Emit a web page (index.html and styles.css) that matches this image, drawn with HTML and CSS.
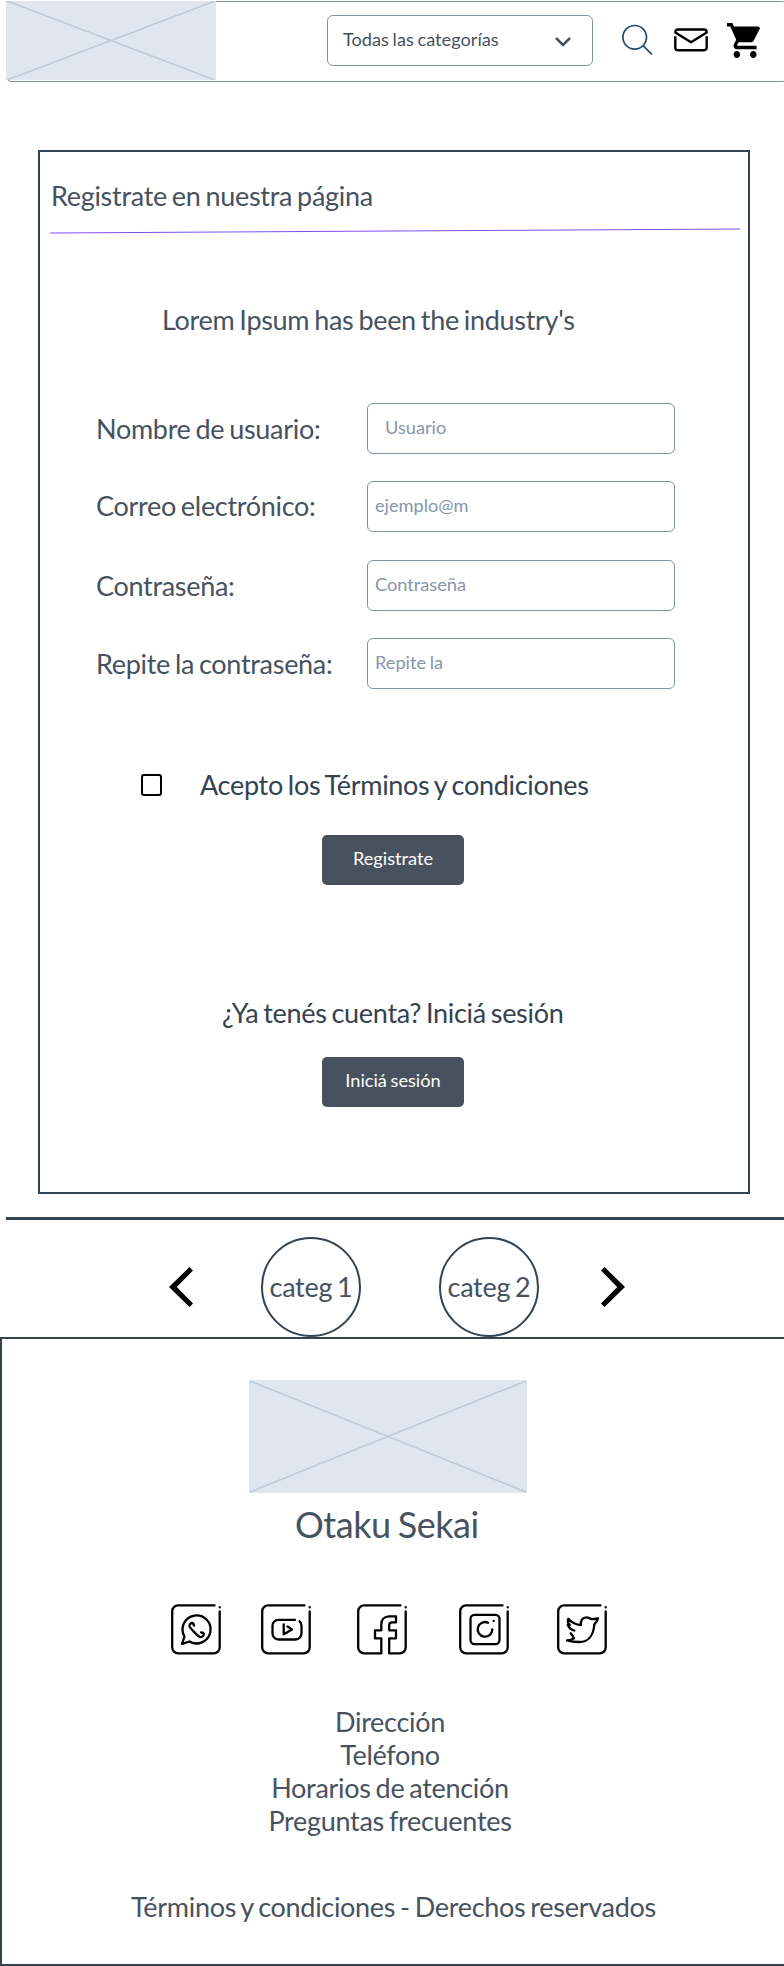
FILE: index.html
```html
<!DOCTYPE html>
<html lang="es">
<head>
<meta charset="utf-8">
<title>Otaku Sekai</title>
<link rel="stylesheet" href="styles.css">
</head>
<body>
<svg class="defs" aria-hidden="true">
  <symbol id="frame" viewBox="0 0 50 51">
    <path d="M43.5 1.4H7.2a6 6 0 0 0-6 6v36a6 6 0 0 0 6 6h35.5a6 6 0 0 0 6-6V7.4M48.7 3.2v.2"/>
  </symbol>
</svg>
<header class="topbar">
  <svg class="logo" viewBox="0 0 210 79" preserveAspectRatio="none"><path d="M1 0 209 79M1 79 209 0"/></svg>
  <button class="select" type="button"><span>Todas las categorías</span>
    <svg class="caret" viewBox="0 0 18 11"><path d="m2 2 7 7 7-7"/></svg>
  </button>
  <svg class="search" viewBox="0 0 32 32"><circle cx="13.7" cy="13.3" r="11.8"/><path d="m22.3 21.8 8.6 8.6"/></svg>
  <svg class="mail" viewBox="0 0 34 24"><path d="M1.3 8.2v11.5a2.5 2.5 0 0 0 2.5 2.5h26.400a2.500 2.500 0 0 0 2.500-2.500V8.200M1.300 4.500c0-2 .8-3 2.800-3h25.800c2 0 2.800 1 2.800 3L17 14.300z"/></svg>
  <svg class="cart" viewBox="1 2 20.700 20" preserveAspectRatio="none"><path d="M7 18c-1.100 0-1.990.9-1.990 2S5.900 22 7 22s2-.9 2-2-.9-2-2-2zM1 2v2h2l3.600 7.590-1.350 2.450c-.16.28-.25.61-.25.960 0 1.100.9 2 2 2h12v-2H7.420c-.14 0-.25-.11-.25-.25l.03-.12.900-1.630h7.450c.75 0 1.410-.41 1.750-1.030l3.580-6.490c.08-.14.120-.31.120-.48 0-.55-.45-1-1-1H5.210l-.94-2H1zm16 16c-1.100 0-1.990.9-1.990 2s.89 2 1.990 2 2-.9 2-2-.9-2-2-2z"/></svg>
</header>

<main class="panel">
  <h1 class="title">Registrate en nuestra página</h1>
  <svg class="rule" viewBox="0 0 690 8"><path d="M0 6 690 2"/></svg>
  <p class="intro">Lorem Ipsum has been the industry's</p>
  <form class="form">
    <label for="user">Nombre de usuario:</label><input class="user" id="user" placeholder="Usuario">
    <label class="email" for="mail">Correo electrónico:</label><input id="mail" placeholder="ejemplo@m">
    <label for="pass">Contraseña:</label><input id="pass" placeholder="Contraseña">
    <label for="again">Repite la contraseña:</label><input id="again" placeholder="Repite la">
  </form>
  <div class="terms"><span class="check"></span><span>Acepto los Términos y condiciones</span></div>
  <button class="btn" type="button">Registrate</button>
  <p class="login">¿Ya tenés cuenta? Iniciá sesión</p>
  <button class="btn" type="button">Iniciá sesión</button>
</main>

<nav class="cats">
  <svg class="arrow" viewBox="0 0 24 40"><path d="M20.500 0 24 3.500 7.800 20 24 36.500 20.500 40 0 20z"/></svg>
  <span class="cat">categ 1</span>
  <span class="cat second">categ 2</span>
  <svg class="arrow next" viewBox="0 0 24 40"><path d="M3.500 0 0 3.500 16.200 20 0 36.500 3.500 40 24 20z"/></svg>
</nav>

<footer class="footer">
  <svg class="brand" viewBox="0 0 278 113" preserveAspectRatio="none"><path d="M1 1 277 112M1 112 277 1"/></svg>
  <h2 class="name">Otaku Sekai</h2>
  <div class="social">
    <svg class="whatsapp" viewBox="0 0 50 51"><use href="#frame"/><path d="M18.500 37.500a14 14 0 1 0-5-5L11 39.800zM23 21.500c-.3-1.500-1-2.500-2-2.500-1.200 0-2.800 1.600-2.500 3.300.4 1.500 8 9.800 10.500 10.700 1.800.5 4-1.300 3.800-2.600-.2-1-1.200-2-2.600-1.900"/></svg>
    <svg class="youtube" viewBox="0 0 50 51"><use href="#frame"/><path d="M34 15.800H17.500a6 6 0 0 0-6 6v7.700a6 6 0 0 0 6 6h17a6 6 0 0 0 6-6v-7.700c0-2-.7-3.600-2-4.500M22.700 20.300v10L31 25.400l-4.500-2.900"/></svg>
    <svg class="facebook" viewBox="0 0 50 51"><path d="M43.500 1.400H7.200a6 6 0 0 0-6 6v36a6 6 0 0 0 6 6H24.300V34.300H18v-8h6.300V20.500c0-5 3.200-8.200 7.700-8.200h7v6h-3.800c-2 0-3 1-3 3v5H39v8h-6.800v15.100h10.500a6 6 0 0 0 6-6V7.400M48.700 3.200v.2"/></svg>
    <svg class="instagram" viewBox="0 0 50 51"><use href="#frame"/><rect x="11.500" y="10.800" width="29" height="29.300" rx="4"/><path d="M29 18.700a7.300 7.300 0 1 0 4.300 6.600M34.700 17v.1"/></svg>
    <svg class="twitter" viewBox="0 0 50 51"><use href="#frame"/><path d="M17.300 26.500c-3-.8-5.300-2.700-6.600-5.800 1 .3 1.500.3 2 .2-2-2-2.300-4-1.400-6.200 3.500 4 7.700 6 12.700 6.300-.8-4.400 1.800-7.700 5.300-7.700 2 0 3.700.8 5 1.900 2.200-.1 4-.4 6.700-.9-.7 2.300-2 4-3.700 6.200C36.500 31.500 31 38.300 21.700 38c-4 0-8-.4-11.700-1.600 3 0 5-.6 7-2-.9-2.200-2-3.600-3.300-5.100"/></svg>
  </div>
  <ul class="links">
    <li>Dirección</li><li>Teléfono</li><li>Horarios de atención</li><li>Preguntas frecuentes</li>
  </ul>
  <p class="legal">Términos y condiciones - Derechos reservados</p>
</footer>
</body>
</html>
```
FILE: styles.css
```css
* { box-sizing: border-box; }
body {
  margin: 0;
  width: 784px;
  height: 1966px;
  overflow: hidden;
  background: #fff;
  color: #475260;
  font: 27px/33px Lato, sans-serif;
  letter-spacing: -0.300px;
  word-spacing: -1.700px;
}
h1, h2, p, ul { margin: 0; padding: 0; font-weight: 400; }
svg { display: block; flex: none; fill: none; overflow: visible; }
.defs { width: 0; height: 0; }

.topbar {
  display: flex;
  width: 781px;
  height: 81px;
  margin: 1px 0 0 6px;
  border: 1px solid #8190a5;
  border-radius: 5px;
}
.logo, .brand { background: #dfe6ee; stroke: #bfcada; stroke-width: 1.700; overflow: hidden; }
.logo { width: 210px; height: 79px; margin: -1px 0 0 -1px; }
.select, .btn, .form input {
  font: 18.200px/21px Lato, sans-serif;
  letter-spacing: 0;
  word-spacing: -1px;
}
.select {
  display: flex;
  justify-content: space-between;
  width: 266px;
  height: 51px;
  margin: 13px 0 0 111px;
  padding: 13px 20px 0 15px;
  border: 1px solid #8190a5;
  border-radius: 6px;
  background: #fff;
  color: #475260;
}
.caret { width: 18px; height: 11px; margin-top: 7px; stroke: #475260; stroke-width: 2.500; }
.search { width: 32px; height: 32px; margin: 22px 0 0 28px; stroke: #1f4e6f; stroke-width: 1.700; }
.mail { width: 34px; height: 24px; margin: 26px 0 0 21px; stroke: #000; stroke-width: 2.400; stroke-linejoin: round; }
.cart { width: 34px; height: 35px; margin: 21px 0 0 19px; fill: #000; }

.panel {
  display: flex;
  flex-direction: column;
  width: 712px;
  height: 1044px;
  margin: 68px 0 0 38px;
  border: 2px solid #35424f;
}
.title { margin: 27px 0 0 11px; font-size: inherit; }
.rule { width: 690px; height: 8px; margin: 15px 0 0 10px; stroke: #7b50f0; stroke-width: 1; }
.intro { margin: 68px 0 0 122px; }
.form {
  display: grid;
  grid-template-columns: 271px 308px;
  grid-auto-rows: 51px;
  row-gap: 27.300px;
  align-items: center;
  margin: 67px 0 0 56px;
}
.form .email { padding-bottom: 2px; }
.form input {
  height: 51px;
  padding: 0 8px 3px 7px;
  border: 1px solid #8190a5;
  border-radius: 6px;
  outline: none;
}
.form .user { padding-left: 17px; }
.form input::placeholder { color: #8795ab; opacity: 1; }
.terms { display: flex; align-items: center; margin: 79px 0 0 101px; color: #35424f; }
.check { width: 21px; height: 22px; margin: 1px 38px 0 0; border: 2px solid #000; border-radius: 3px; }
.btn {
  width: 142px;
  height: 50px;
  margin: 34px 0 0 282px;
  padding: 0 0 3px;
  border: 0;
  border-radius: 5px;
  background: #48525f;
  color: #fff;
}
.login { margin: 111px 0 0 182px; color: #35424f; }
.login + .btn { margin-top: 28px; }

.cats {
  display: flex;
  height: 120px;
  margin: 23px 0 0 6px;
  padding: 17px 0 0 163px;
  border-top: 3px solid #35424f;
}
.arrow { width: 24px; height: 40px; margin-top: 30px; fill: #000; }
.cat {
  width: 100px;
  height: 100px;
  margin-left: 68px;
  padding-top: 31px;
  border: 2px solid #35424f;
  border-radius: 50%;
  text-align: center;
  white-space: nowrap;
}
.second { margin-left: 78px; }
.next { margin-left: 62px; }

.footer {
  width: 800px;
  height: 629px;
  padding-top: 41px;
  border: 2px solid #35424f;
}
.brand { width: 278px; height: 113px; margin-left: 247px; }
.name { margin: 10px 0 0 293px; font-size: 36px; line-height: 43px; letter-spacing: -0.450px; }
.social { display: flex; margin: 58px 0 0 169px; stroke: #000; stroke-width: 2.300; stroke-linecap: round; stroke-linejoin: round; }
.social svg { width: 50px; height: 51px; }
.social .youtube { margin-left: 40px; }
.social .facebook { margin-left: 46px; }
.social .instagram { margin-left: 52px; }
.social .twitter { margin-left: 47.500px; }
.links { width: 776px; margin-top: 50px; list-style: none; text-align: center; }
.legal { margin: 53px 0 0 129px; }
```
